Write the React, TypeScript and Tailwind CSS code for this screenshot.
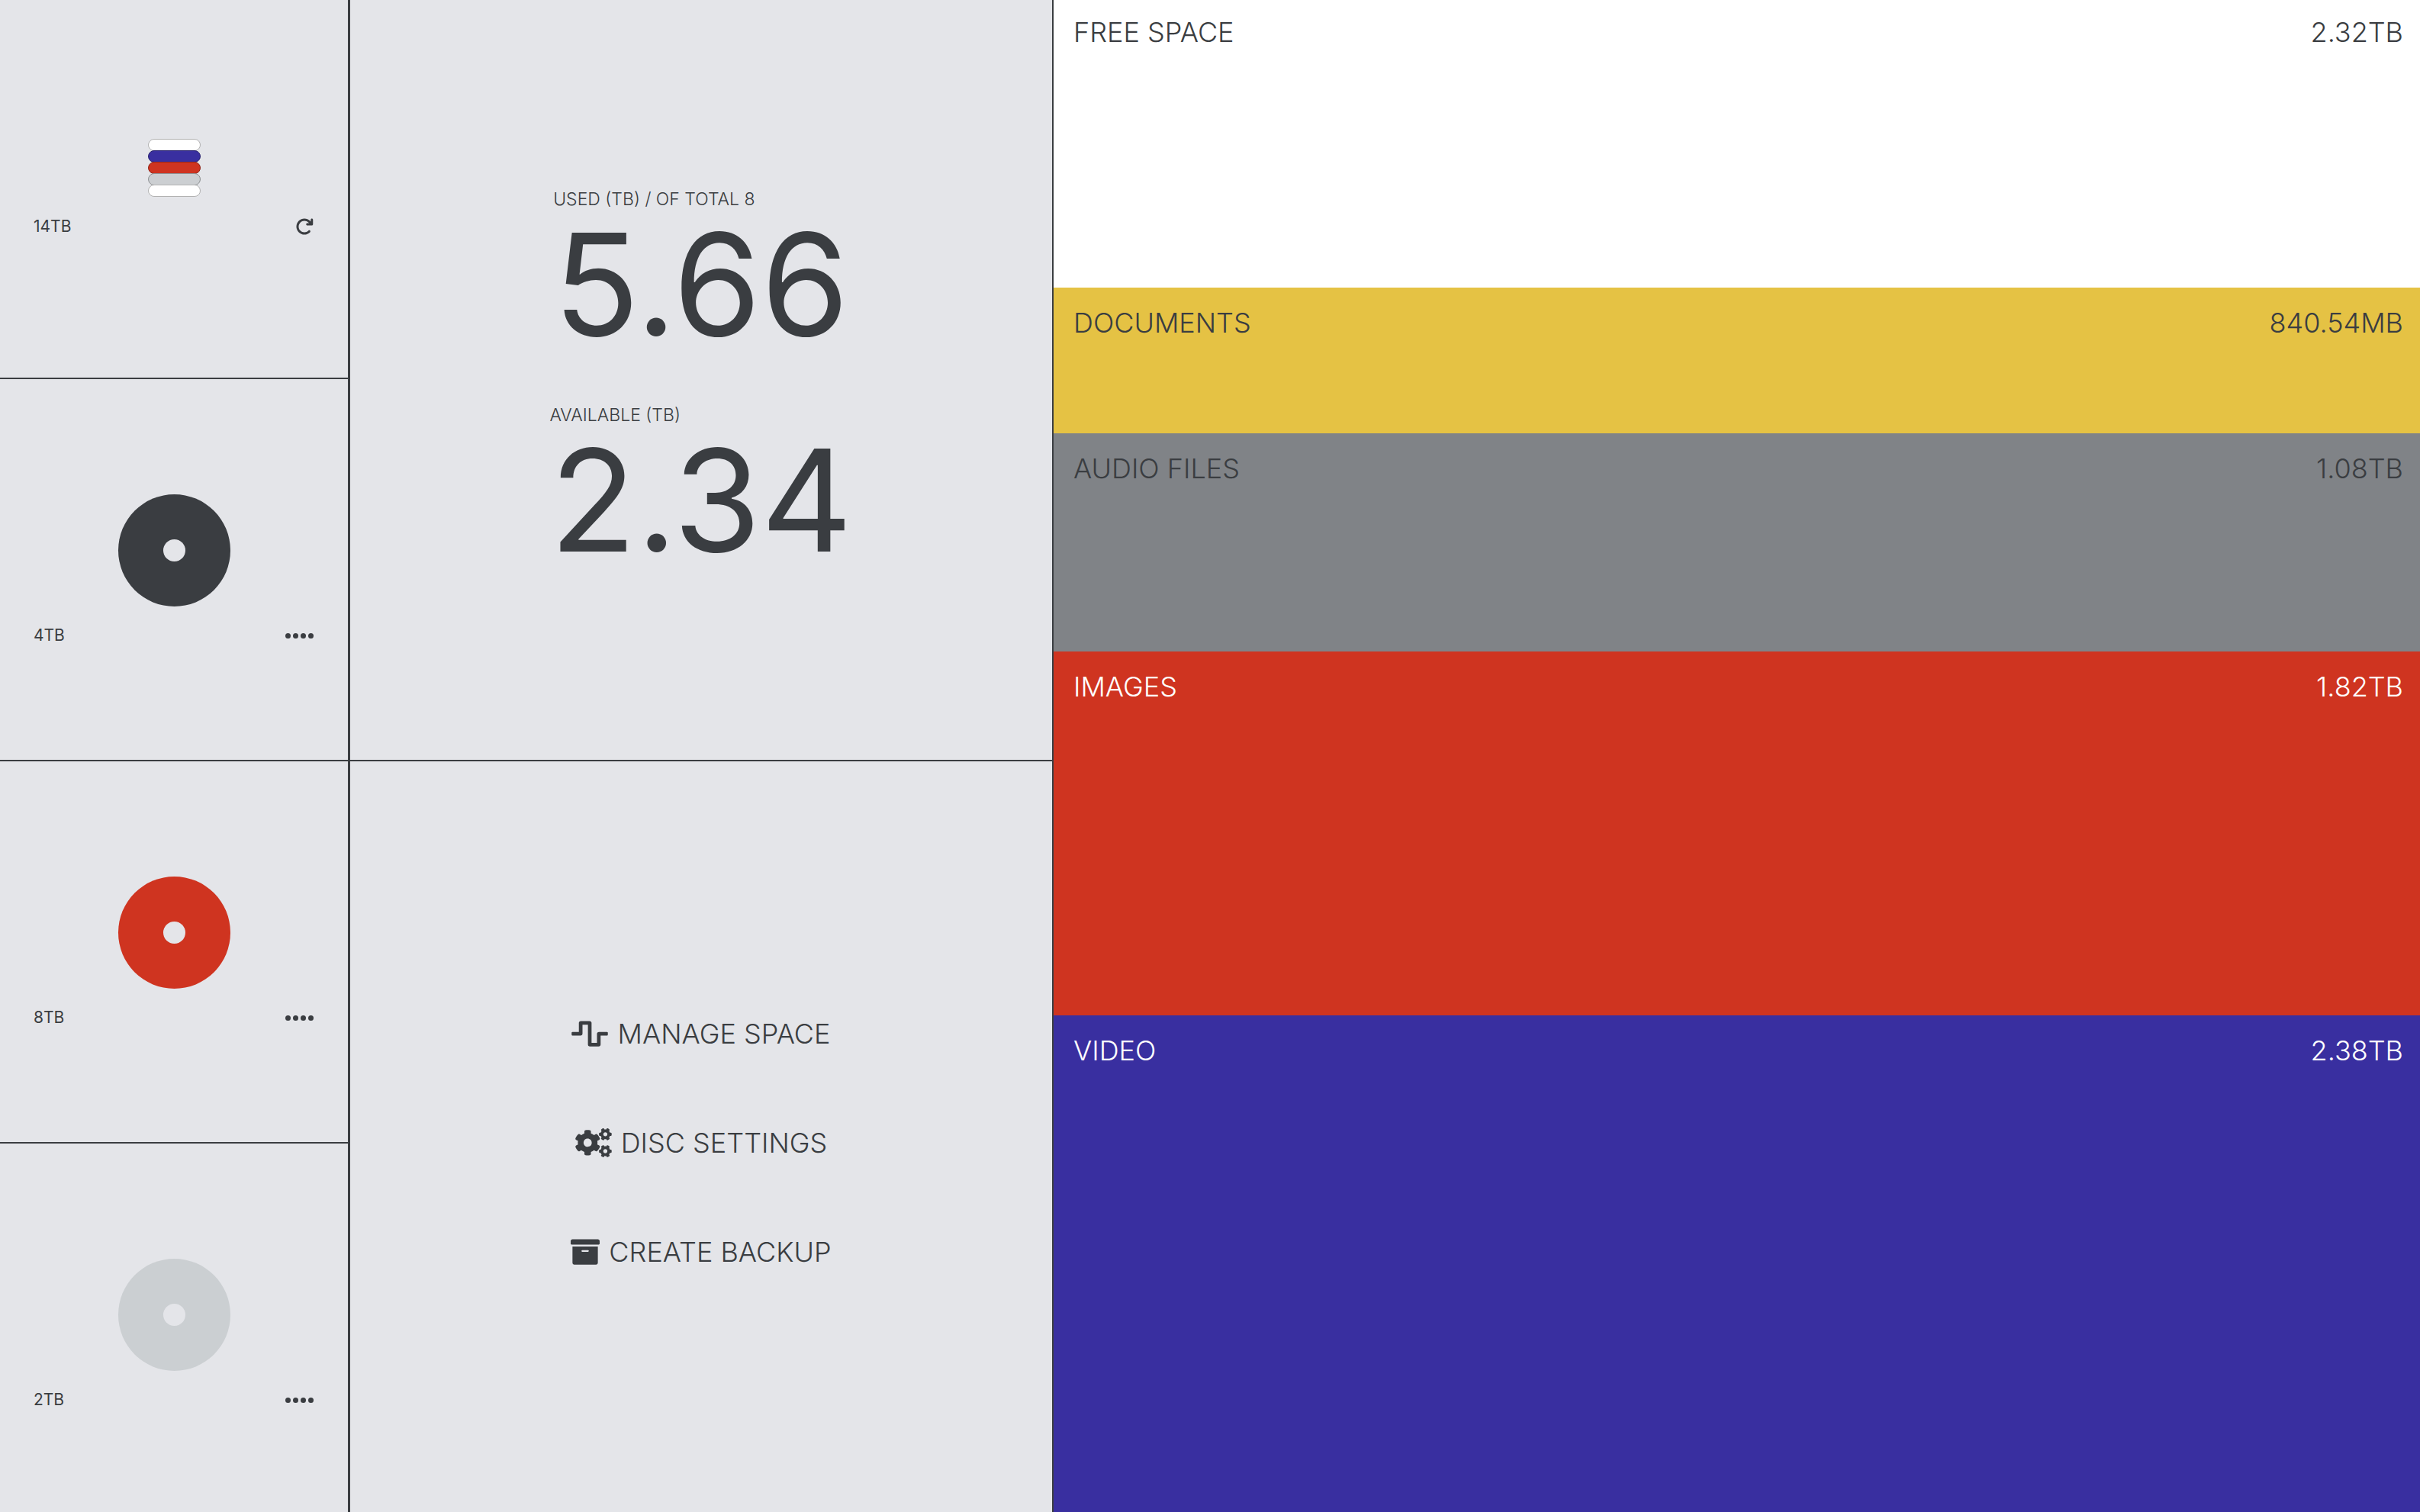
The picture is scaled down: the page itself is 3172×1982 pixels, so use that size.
import { FaWaveSquare, FaCogs, FaArchive } from "react-icons/fa";
import { FaArrowRotateRight } from "react-icons/fa6";
import type { IconType } from "react-icons";

const layers = [
  "bg-white border-[#b2b2b2]",
  "bg-[#392fa0] border-[#28216f]",
  "bg-[#cf3420] border-[#912416]",
  "bg-[#cccfd2] border-[#8e9193]",
  "bg-white border-[#b2b2b2]",
];

const discs = [
  { size: "4TB", color: "bg-[#3a3d41]" },
  { size: "8TB", color: "bg-[#cf3420]" },
  { size: "2TB", color: "bg-[#cbcfd2]" },
];

const stats = [
  { label: "USED (TB) / OF TOTAL 8", value: "5.66" },
  { label: "AVAILABLE (TB)", value: "2.34" },
];

const actions: { label: string; Icon: IconType; box: string }[] = [
  { label: "MANAGE SPACE", Icon: FaWaveSquare, box: "w-12" },
  { label: "DISC SETTINGS", Icon: FaCogs, box: "w-12" },
  { label: "CREATE BACKUP", Icon: FaArchive, box: "w-[38px]" },
];

const categories = [
  { name: "FREE SPACE", size: "2.32TB", style: "bg-white pt-[18px]" },
  { name: "DOCUMENTS", size: "840.54MB", style: "bg-[#e5c244] pt-[22px]" },
  { name: "AUDIO FILES", size: "1.08TB", style: "bg-[#808387] pt-[22px]" },
  { name: "IMAGES", size: "1.82TB", style: "bg-[#cf3420] pt-[22px] text-white" },
  { name: "VIDEO", size: "2.38TB", style: "bg-[#392fa0] pt-[22px] text-white" },
];

function Dots() {
  return (
    <span className="flex gap-[3px]">
      {[0, 1, 2, 3].map((i) => (
        <span key={i} className="size-[7px] rounded-full bg-[#3a3d41]" />
      ))}
    </span>
  );
}

function Sidebar() {
  return (
    <nav
      aria-label="Discs"
      className="grid h-[calc(100vh+18px)] grid-rows-[497fr_501fr_501fr_501fr] border-r-3 border-[#3a3d41]"
    >
      <section className="flex flex-col items-center justify-center gap-6 border-b-2 border-[#3a3d41]">
        <div className="w-[69px]">
          {layers.map((layer, i) => (
            <div key={i} className={`mb-[-1px] h-4 rounded-full border ${layer}`} />
          ))}
        </div>
        <div className="flex h-8 w-full items-center justify-between pr-[45px] pl-11 text-[21px]">
          <span>14TB</span>
          <button type="button" aria-label="Refresh">
            <FaArrowRotateRight className="size-6" />
          </button>
        </div>
      </section>
      {discs.map((disc) => (
        <section
          key={disc.size}
          className="flex flex-col items-center justify-center gap-[22px] border-b-2 border-[#3a3d41] pt-1"
        >
          <div className={`flex size-[147px] items-center justify-center rounded-full ${disc.color}`}>
            <div className="size-[29px] rounded-full bg-[#e4e5e9]" />
          </div>
          <div className="flex h-8 w-full items-center justify-between pr-[45px] pl-11 text-[21px]">
            <span>{disc.size}</span>
            <button type="button" aria-label={`${disc.size} disc options`}>
              <Dots />
            </button>
          </div>
        </section>
      ))}
    </nav>
  );
}

function Overview() {
  return (
    <div className="grid h-screen grid-rows-[998fr_984fr] border-r-2 border-[#3a3d41]">
      <section className="flex flex-col items-center justify-center gap-[59px] border-b-2 border-[#3a3d41]">
        {stats.map((stat) => (
          <div key={stat.label}>
            <h2 className="text-[23px] font-light leading-8">{stat.label}</h2>
            <p className="text-[186px] leading-[192px]">{stat.value}</p>
          </div>
        ))}
      </section>
      <section className="flex flex-col items-center justify-center gap-[95px] pt-4">
        {actions.map(({ label, Icon, box }) => (
          <button
            key={label}
            type="button"
            className="flex items-center gap-3 text-4xl font-light leading-[48px]"
          >
            <Icon className={`h-[38px] ${box}`} />
            {label}
          </button>
        ))}
      </section>
    </div>
  );
}

export default function App() {
  return (
    <main className="grid h-screen grid-cols-[459fr_922fr_1791fr] overflow-hidden bg-[#e4e5e9] font-['Inter',sans-serif] text-[#3a3d41]">
      <Sidebar />
      <Overview />
      <div className="grid h-screen grid-rows-[377fr_191fr_286fr_477fr_651fr]">
        {categories.map((category) => (
          <section
            key={category.name}
            className={`flex items-start justify-between pr-[22px] pl-[26px] text-4xl font-light leading-[48px] ${category.style}`}
          >
            <h2>{category.name}</h2>
            <span>{category.size}</span>
          </section>
        ))}
      </div>
    </main>
  );
}
